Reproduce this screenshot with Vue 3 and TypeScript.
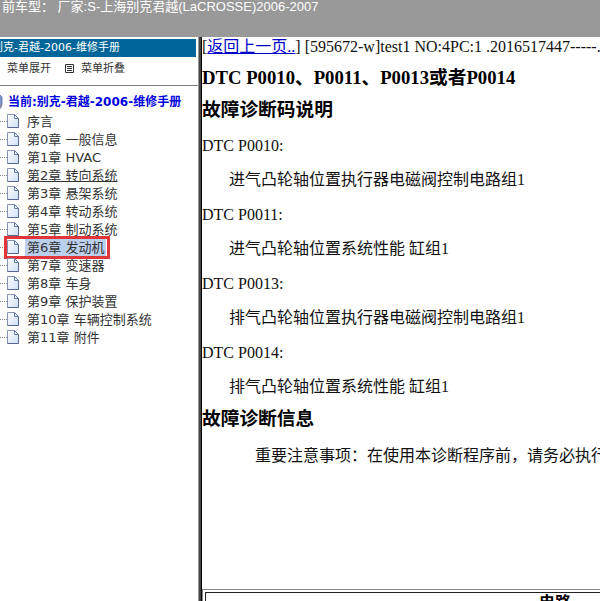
<script setup lang="ts">
import { ref } from 'vue'

interface Chapter {
  id: number
  label: string
  hovered?: boolean
}

interface Fault {
  code: string
  text: string
}

const chapters: Chapter[] = [
  { id: 0, label: '序言' },
  { id: 1, label: '第0章 一般信息' },
  { id: 2, label: '第1章 HVAC' },
  { id: 3, label: '第2章 转向系统', hovered: true },
  { id: 4, label: '第3章 悬架系统' },
  { id: 5, label: '第4章 转动系统' },
  { id: 6, label: '第5章 制动系统' },
  { id: 7, label: '第6章 发动机' },
  { id: 8, label: '第7章 变速器' },
  { id: 9, label: '第8章 车身' },
  { id: 10, label: '第9章 保护装置' },
  { id: 11, label: '第10章 车辆控制系统' },
  { id: 12, label: '第11章 附件' },
]

const faults: Fault[] = [
  { code: 'DTC P0010:', text: '进气凸轮轴位置执行器电磁阀控制电路组1' },
  { code: 'DTC P0011:', text: '进气凸轮轴位置系统性能 缸组1' },
  { code: 'DTC P0013:', text: '排气凸轮轴位置执行器电磁阀控制电路组1' },
  { code: 'DTC P0014:', text: '排气凸轮轴位置系统性能 缸组1' },
]

const selected = ref(7)
const expanded = ref(true)
</script>

<template>
  <div class="page">
    <header class="banner">前车型： 厂家:S-上海别克君越(LaCROSSE)2006-2007</header>
    <div class="frames">
      <aside class="sidebar">
        <div class="scrolled">
          <div class="manual">别克-君越-2006-维修手册</div>
          <div class="tools">
            <button type="button" @click="expanded = true">
              <svg width="9" height="9" viewBox="0 0 9 9" aria-hidden="true">
                <path d="M.5.5h8v8h-8zM2 2.5h5M2 4.5h5M2 6.5h5" />
              </svg>
              菜单展开
            </button>
            <button type="button" @click="expanded = false">
              <svg width="9" height="9" viewBox="0 0 9 9" aria-hidden="true">
                <path d="M.5.5h8v8h-8zM2 2.5h5M2 4.5h5M2 6.5h5" />
              </svg>
              菜单折叠
            </button>
          </div>
          <nav class="tree">
            <div class="root">
              <svg width="16" height="16" viewBox="0 0 16 16" aria-hidden="true">
                <path d="M2 1h11l2 2v8l-2 1v3H4l-2-2z" fill="#7d95cb" stroke="#6a80b8" />
                <path d="M4 3h8v8H4z" fill="#cfdcf6" />
                <path d="M10 13l5-3v3l-3 2h-3z" fill="#8d8a96" />
              </svg>
              <a href="#root">当前:别克-君越-2006-维修手册</a>
            </div>
            <ul v-if="expanded">
              <li v-for="c in chapters" :key="c.id" :class="{ selected: selected === c.id }">
                <span class="dots"></span>
                <svg class="doc" width="12" height="14" viewBox="0 0 12 14" aria-hidden="true">
                  <defs>
                    <linearGradient :id="'g' + c.id" x1="0" y1="0" x2="1" y2="1">
                      <stop offset="0" stop-color="#fff" />
                      <stop offset="1" stop-color="#cfdff8" />
                    </linearGradient>
                  </defs>
                  <path d="M.5.5h7l4 4v9H.5z" :fill="`url(#g${c.id})`" stroke="#8795b5" />
                  <path d="M11.5 4.5v9H.5" fill="none" stroke="#566793" />
                  <path d="M7.5.5v4h4z" fill="#e8effc" stroke="#667aa8" />
                </svg>
                <a :href="'#c' + c.id" :class="{ hovered: c.hovered }" @click="selected = c.id">{{ c.label }}</a>
              </li>
            </ul>
          </nav>
        </div>
      </aside>
      <div class="divider"></div>
      <main class="content">
        <div class="article">
          <div class="crumb">[<a href="#back">返回上一页..</a>] [595672-w]test1 NO:4PC:1 .2016517447-----.</div>
          <h3>DTC P0010、P0011、P0013或者P0014</h3>
          <h3>故障诊断码说明</h3>
          <dl>
            <template v-for="f in faults" :key="f.code">
              <dt>{{ f.code }}</dt>
              <dd>{{ f.text }}</dd>
            </template>
          </dl>
          <h3>故障诊断信息</h3>
          <p class="note">重要注意事项：在使用本诊断程序前，请务必执行</p>
          <table>
            <thead>
              <tr><th scope="col">电路</th></tr>
            </thead>
          </table>
        </div>
      </main>
    </div>
  </div>
</template>

<style>
body {
  margin: 0;
  overflow: hidden;
  background: #fff;
}
</style>

<style scoped>
.page {
  display: flex;
  flex-direction: column;
  height: 100vh;
  overflow: hidden;
}
.banner {
  flex: none;
  height: 37px;
  padding-left: 2px;
  background: #999;
  color: #fff;
  font: 13px/13px "Liberation Sans", "Noto Sans CJK SC", sans-serif;
  white-space: nowrap;
}
.frames {
  flex: 1;
  min-height: 0;
  display: flex;
}
.sidebar {
  flex: none;
  width: 198px;
  overflow: hidden;
  font-family: "DejaVu Sans", "Noto Sans CJK SC", sans-serif;
  white-space: nowrap;
}
.divider {
  flex: none;
  width: 2px;
  border-left: 1px solid #999;
  border-right: 1px solid #000;
  background: #444;
}
.scrolled {
  margin-left: -13px;
}
.manual {
  margin: 2px 2px 0 0;
  padding-left: 5px;
  background: #069;
  color: #fff;
  font-size: 11px;
  line-height: 18px;
}
.tools {
  display: flex;
  gap: 14px;
  height: 28px;
  padding-left: 4px;
  border-bottom: 1px solid #808080;
}
.tools button {
  display: flex;
  align-items: center;
  gap: 7px;
  height: 23px;
  padding: 0;
  border: 0;
  background: none;
  color: #333;
  font: inherit;
  font-size: 11px;
  line-height: 23px;
}
.tools path {
  fill: none;
  stroke: #333;
}
.root {
  display: flex;
  align-items: center;
  gap: 5px;
  height: 18px;
  padding-top: 7px;
}
.root a {
  color: #00d;
  font-size: 12px;
  font-weight: bold;
  line-height: 16px;
  text-decoration: none;
}
ul {
  margin: 0;
  padding: 1px 0 0;
  list-style: none;
}
li {
  position: relative;
  display: flex;
  align-items: center;
  height: 18px;
}
.dots {
  width: 20px;
  height: 0;
  border-top: 1px dotted #888;
}
.doc {
  margin-right: 6px;
}
li a {
  padding: 0 2px;
  color: #333;
  font-size: 13px;
  line-height: 17px;
  text-decoration: none;
}
li a.hovered {
  text-decoration: underline;
}
.selected a {
  background: #bccfed;
}
.selected::after {
  content: "";
  position: absolute;
  top: -2px;
  left: 17px;
  width: 100px;
  height: 17px;
  border: 3px solid #e0363a;
}
.content {
  flex: 1;
  min-width: 0;
  overflow: hidden;
  font: 16px/19px "Liberation Serif", "Noto Sans CJK SC", serif;
  color: #111;
}
.article {
  width: 706px;
  white-space: nowrap;
}
.crumb {
  height: 25px;
  line-height: 19px;
}
.crumb a {
  color: #0000c8;
}
h3 {
  margin: 0;
  line-height: 32px;
  color: #000;
}
dl {
  margin: 0;
  padding-top: 1px;
}
dt {
  line-height: 37px;
}
dd {
  margin: 0 0 0 27px;
  line-height: 32px;
}
.note {
  margin: 0;
  padding-left: 53px;
  line-height: 42px;
}
table {
  width: 100%;
  margin-top: 112px;
  border: 1px solid #888;
  border-spacing: 2px;
}
th {
  padding: 0;
  border: 1px solid #222;
  color: #000;
}
</style>
